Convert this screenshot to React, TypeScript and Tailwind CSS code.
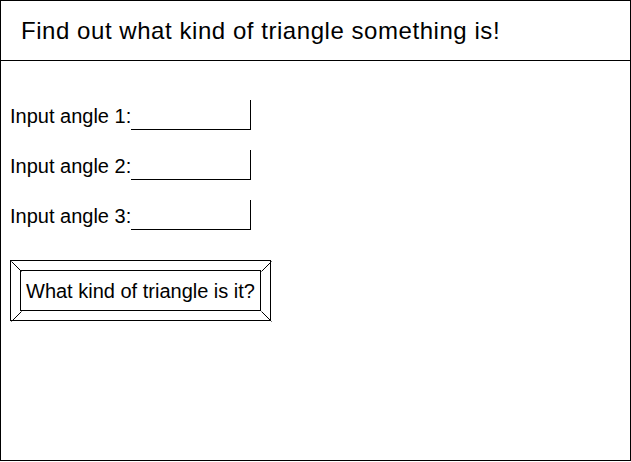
import React from 'react';

const rows = ['Input angle 1:', 'Input angle 2:', 'Input angle 3:'];

export default function App() {
  return (
    <div className="w-[631px] h-[462px] bg-white font-['Liberation_Sans',Arial,sans-serif] text-black">
      <div className="w-[631px] h-[461px] border border-black flex flex-col">
        {/* Header */}
        <div className="h-[60px] border-b border-black flex items-center pl-[20px] text-[24px] tracking-[0.55px] pt-[1px]">
          Find out what kind of triangle something is!
        </div>

        {/* Body */}
        <div className="flex flex-col pl-[9px] pt-[39px] gap-[20px]">
          {rows.map((label) => (
            <div key={label} className="flex items-center h-[30px]">
              <span className="text-[20px] pt-[2px]">{label}</span>
              <div className="w-[120px] h-[30px] border-r border-b border-black" />
            </div>
          ))}

          <div className="mt-[10px] relative w-[261px] h-[61px] border border-black p-[9px]">
            <svg
              className="absolute inset-0 pointer-events-none"
              width="261"
              height="61"
              viewBox="0 0 261 61"
            >
              <g stroke="black" strokeWidth="1" fill="none">
                <line x1="0.5" y1="0.5" x2="10.5" y2="10.5" />
                <line x1="260.5" y1="0.5" x2="250.5" y2="10.5" />
                <line x1="0.5" y1="60.5" x2="10.5" y2="50.5" />
                <line x1="260.5" y1="60.5" x2="250.5" y2="50.5" />
              </g>
            </svg>
            <div className="w-full h-full border border-black flex items-center justify-center text-[20px]">
              What kind of triangle is it?
            </div>
          </div>
        </div>
      </div>
    </div>
  );
}
